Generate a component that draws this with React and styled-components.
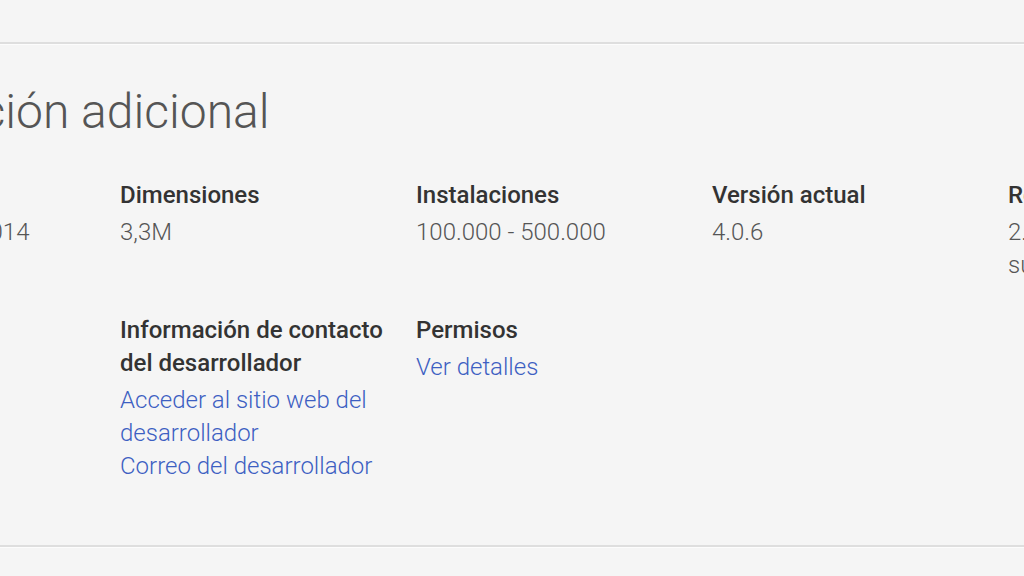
import React from "react";
import styled, { createGlobalStyle } from "styled-components";

const GlobalStyle = createGlobalStyle`
  html, body {
    margin: 0;
    padding: 0;
    background: #f5f5f5;
    overflow: hidden;
  }
  body {
    font-family: Roboto, "Liberation Sans", Arial, sans-serif;
  }
`;

const rows = [
  [
    { title: "Actualizada", value: ["23 de junio de 2014"] },
    { title: "Dimensiones", value: ["3,3M"] },
    { title: "Instalaciones", value: ["100.000 - 500.000"] },
    { title: "Versión actual", value: ["4.0.6"] },
    { title: "Requiere Android", value: ["2.3 y versiones superiores"] },
  ],
  [
    null,
    {
      title: "Información de contacto del desarrollador",
      links: ["Acceder al sitio web del desarrollador", "Correo del desarrollador"],
    },
    { title: "Permisos", links: ["Ver detalles"] },
  ],
];

function App() {
  return (
    <Page>
      <GlobalStyle />
      <Section>
        <Content>
          <Heading>Información adicional</Heading>
          {rows.map((row, i) => (
            <Row key={i}>
              {row.map((item, j) => (
                <Cell key={j}>
                  {item && (
                    <>
                      <Label>{item.title}</Label>
                      {item.value &&
                        item.value.map((v) => <Value key={v}>{v}</Value>)}
                      {item.links &&
                        item.links.map((l) => (
                          <Link key={l} href="#">
                            {l}
                          </Link>
                        ))}
                    </>
                  )}
                </Cell>
              ))}
            </Row>
          ))}
        </Content>
      </Section>
    </Page>
  );
}

export default App;

const Page = styled.div`
  width: 1024px;
  height: 576px;
  padding-top: 42px;
  box-sizing: border-box;
  overflow: hidden;
`;

const Section = styled.div`
  border-top: 2px solid #dedede;
  border-bottom: 2px solid #dedede;
  box-shadow: inset 0 1px 0 #fcfcfc, 0 1px 0 #fcfcfc;
  height: 505px;
  box-sizing: border-box;
`;

const Content = styled.div`
  margin-left: -176px;
  width: 1600px;
`;

const Heading = styled.h2`
  margin: 0 0 0 -10px;
  padding-top: 36px;
  font-size: 48px;
  line-height: 64px;
  font-weight: 300;
  color: #555;
`;

const Row = styled.div`
  display: grid;
  grid-template-columns: repeat(5, 296px);
  margin-top: 35px;

  & + & {
    margin-top: 32px;
  }
`;

const Cell = styled.div`
  display: flex;
  flex-direction: column;
  padding-right: 24px;
  font-size: 24px;
  line-height: 33px;
`;

const Label = styled.div`
  font-weight: 500;
  color: #333;
  margin-bottom: 4px;
`;

const Value = styled.div`
  color: #555;
  font-weight: 300;
`;

const Link = styled.a`
  color: #3d5fc2;
  font-weight: 300;
  text-decoration: none;
`;
